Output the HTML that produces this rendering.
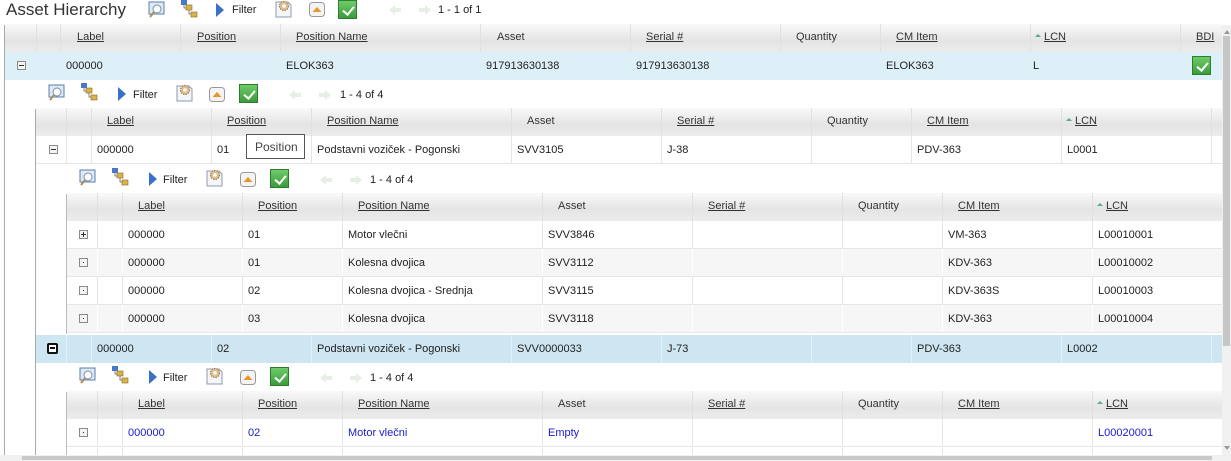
<!DOCTYPE html>
<html style="width:1231px;height:461px;overflow:hidden"><head><meta charset="utf-8"><style>
*{margin:0;padding:0;box-sizing:border-box}
body{width:1231px;height:461px;overflow:hidden;background:#fff;font-family:"Liberation Sans",Arial,sans-serif;font-size:11px;color:#222;position:relative}
.a{position:absolute;white-space:nowrap}
.hd{position:absolute;height:28px;background:linear-gradient(#f9f9f9,#e4e4e4 60%,#ececec)}
.hd span{position:absolute;top:7px;color:#333}
.hd u{color:#333}
.row{position:absolute;height:28px;border-bottom:1px solid #e6e6e6}
.row span{position:absolute;top:8px}
.sep{position:absolute;top:0;bottom:0;width:1px;background:#e4e4e4}
.hd .sep{background:#e0e0e0}
.ex{position:absolute;width:9px;height:9px;border:1px solid #8a8a8a;background:#f4f4f4;top:9px}
.ex:after{content:"";position:absolute;left:1px;top:3px;width:5px;height:1px;background:#333}
.ex.p:before{content:"";position:absolute;left:3px;top:1px;width:1px;height:5px;background:#333}
.ex.d:after{left:3px;top:3px;width:1px;height:1px}
.ex.b{width:11px;height:11px;border:2px solid #111;border-radius:2px;background:#fff;top:8px}
.ex.b:after{left:1px;top:2px;width:5px;height:2px;background:#111}
.chk{position:absolute;width:19px;height:19px;background:linear-gradient(#6fcb6a,#3b9b3a);border:1px solid #2e7d2e}
.chk:after{content:"";position:absolute;left:6px;top:3px;width:5px;height:9px;border:solid #fff;border-width:0 2px 2px 0;transform:rotate(40deg)}
.lcn:before{content:"";display:inline-block;width:0;height:0;border:3px solid transparent;border-bottom:3px solid #5a9;margin-right:3px;vertical-align:3px}
.blue{color:#1a1acc}
</style></head><body>

<div class="a" style="left:6px;top:0px;font-size:17px;color:#333">Asset Hierarchy</div>

<svg width="0" height="0" style="position:absolute"><defs>
<g id="mag"><rect x="1" y="1" width="15" height="12" fill="#dfeaf5" stroke="#5a7fb0"/><circle cx="9" cy="8" r="4" fill="#fff" stroke="#7a8fa8"/><line x1="6" y1="11" x2="2" y2="16" stroke="#b08a50" stroke-width="2"/></g>
<g id="tree"><rect x="1" y="0" width="6" height="5" fill="#4a78c8"/><rect x="6" y="5" width="6" height="5" fill="#d8b24a" stroke="#8a6a20" stroke-width=".6"/><rect x="11" y="12" width="6" height="5" fill="#d8b24a" stroke="#8a6a20" stroke-width=".6"/><path d="M4 5v3h2M9 10v4h2" stroke="#666" fill="none" stroke-width=".8"/></g>
<g id="tri"><path d="M1 1 L9 8 L1 15 Z" fill="#3a70c8"/></g>
<g id="page"><path d="M1 2h12l3 3v12H1z" fill="#f4f6fa" stroke="#8d9bb2"/><circle cx="9" cy="6" r="4.5" fill="#e0c090" stroke="#a08050" stroke-width="1.2" stroke-dasharray="1.5 1"/><circle cx="9" cy="6" r="1.8" fill="#fff"/></g>
<g id="up"><rect x="0.5" y="0.5" width="15" height="14" rx="3" fill="#f4f4f4" stroke="#999"/><path d="M3.5 10 L8 5 L12.5 10Z" fill="#e8962a"/></g>
<g id="la"><path d="M1 7 L7 2 V5 H13 V9 H7 V12Z" fill="#e6eee6"/></g>
<g id="ra"><path d="M13 7 L7 2 V5 H1 V9 H7 V12Z" fill="#e6eee6"/></g>
</defs></svg>

<svg class="a" style="left:148px;top:1px" width="18" height="18"><use href="#mag"/></svg>
<svg class="a" style="left:180px;top:0px" width="18" height="18"><use href="#tree"/></svg>
<svg class="a" style="left:215px;top:2px" width="10" height="16"><use href="#tri"/></svg>
<div class="a" style="left:232px;top:4px">Filter</div>
<svg class="a" style="left:275px;top:0px" width="18" height="19"><use href="#page"/></svg>
<svg class="a" style="left:309px;top:2px" width="17" height="16"><use href="#up"/></svg>
<div class="chk" style="left:338px;top:0px"></div>
<svg class="a" style="left:388px;top:3px" width="14" height="14"><use href="#la"/></svg>
<svg class="a" style="left:418px;top:3px" width="14" height="14"><use href="#ra"/></svg>
<div class="a" style="left:438px;top:4px">1 - 1 of 1</div>

<div class="a" style="left:4px;top:25px;width:1px;height:430px;background:#aaa"></div>

<div class="hd" style="left:5px;top:24px;width:1217px">
<i class="sep" style="left:31px"></i><i class="sep" style="left:55px"></i><i class="sep" style="left:175px"></i><i class="sep" style="left:275px"></i><i class="sep" style="left:475px"></i><i class="sep" style="left:625px"></i><i class="sep" style="left:775px"></i><i class="sep" style="left:875px"></i><i class="sep" style="left:1025px"></i><i class="sep" style="left:1175px"></i>
<span style="left:72px"><u>Label</u></span><span style="left:192px"><u>Position</u></span><span style="left:291px"><u>Position Name</u></span><span style="left:492px">Asset</span><span style="left:641px"><u>Serial #</u></span><span style="left:791px">Quantity</span><span style="left:891px"><u>CM Item</u></span><span style="left:1030px" class="lcn"><u>LCN</u></span><span style="left:1191px"><u>BDI</u></span>
</div>
<div class="row" style="left:5px;top:52px;width:1217px;background:#ddf0f7;border:none">
<i class="ex" style="left:12px"></i>
<span style="left:61px">000000</span><span style="left:281px">ELOK363</span><span style="left:481px">917913630138</span><span style="left:631px">917913630138</span><span style="left:881px">ELOK363</span><span style="left:1028px">L</span>
<div class="chk" style="left:1187px;top:4px"></div>
</div>

<svg class="a" style="left:48px;top:84px" width="18" height="18"><use href="#mag"/></svg>
<svg class="a" style="left:80px;top:83px" width="18" height="18"><use href="#tree"/></svg>
<svg class="a" style="left:117px;top:86px" width="10" height="16"><use href="#tri"/></svg>
<div class="a" style="left:133px;top:89px">Filter</div>
<svg class="a" style="left:176px;top:84px" width="18" height="19"><use href="#page"/></svg>
<svg class="a" style="left:209px;top:87px" width="17" height="16"><use href="#up"/></svg>
<div class="chk" style="left:239px;top:84px"></div>
<svg class="a" style="left:288px;top:88px" width="14" height="14"><use href="#la"/></svg>
<svg class="a" style="left:318px;top:88px" width="14" height="14"><use href="#ra"/></svg>
<div class="a" style="left:340px;top:89px">1 - 4 of 4</div>

<div class="a" style="left:35px;top:109px;width:1px;height:346px;background:#aaa"></div>

<div class="hd" style="left:36px;top:108px;width:1186px">
<i class="sep" style="left:30px"></i><i class="sep" style="left:55px"></i><i class="sep" style="left:175px"></i><i class="sep" style="left:275px"></i><i class="sep" style="left:475px"></i><i class="sep" style="left:625px"></i><i class="sep" style="left:775px"></i><i class="sep" style="left:875px"></i><i class="sep" style="left:1025px"></i><i class="sep" style="left:1175px"></i>
<span style="left:71px"><u>Label</u></span><span style="left:191px"><u>Position</u></span><span style="left:291px"><u>Position Name</u></span><span style="left:491px">Asset</span><span style="left:641px"><u>Serial #</u></span><span style="left:791px">Quantity</span><span style="left:891px"><u>CM Item</u></span><span style="left:1030px" class="lcn"><u>LCN</u></span>
</div>
<div class="row" style="left:36px;top:136px;width:1186px;background:#fff">
<i class="sep" style="left:30px"></i><i class="sep" style="left:55px"></i><i class="sep" style="left:175px"></i><i class="sep" style="left:275px"></i><i class="sep" style="left:475px"></i><i class="sep" style="left:625px"></i><i class="sep" style="left:775px"></i><i class="sep" style="left:875px"></i><i class="sep" style="left:1025px"></i><i class="sep" style="left:1175px"></i>
<i class="ex" style="left:13px"></i>
<span style="left:61px">000000</span><span style="left:181px">01</span><span style="left:281px">Podstavni voziček - Pogonski</span><span style="left:481px">SVV3105</span><span style="left:631px">J-38</span><span style="left:881px">PDV-363</span><span style="left:1031px">L0001</span>
</div>
<div class="a" style="left:246px;top:134px;width:59px;height:25px;border:1px solid #555;background:#fff;font-size:12px;padding:5px 0 0 8px;color:#444">Position</div>

<svg class="a" style="left:79px;top:169px" width="18" height="18"><use href="#mag"/></svg>
<svg class="a" style="left:111px;top:168px" width="18" height="18"><use href="#tree"/></svg>
<svg class="a" style="left:148px;top:171px" width="10" height="16"><use href="#tri"/></svg>
<div class="a" style="left:163px;top:174px">Filter</div>
<svg class="a" style="left:206px;top:169px" width="18" height="19"><use href="#page"/></svg>
<svg class="a" style="left:240px;top:172px" width="17" height="16"><use href="#up"/></svg>
<div class="chk" style="left:270px;top:169px"></div>
<svg class="a" style="left:319px;top:173px" width="14" height="14"><use href="#la"/></svg>
<svg class="a" style="left:349px;top:173px" width="14" height="14"><use href="#ra"/></svg>
<div class="a" style="left:370px;top:174px">1 - 4 of 4</div>

<div class="a" style="left:66px;top:194px;width:1px;height:140px;background:#bbb"></div>

<div class="hd" style="left:67px;top:193px;width:1155px">
<i class="sep" style="left:30px"></i><i class="sep" style="left:55px"></i><i class="sep" style="left:175px"></i><i class="sep" style="left:275px"></i><i class="sep" style="left:475px"></i><i class="sep" style="left:625px"></i><i class="sep" style="left:775px"></i><i class="sep" style="left:875px"></i><i class="sep" style="left:1025px"></i>
<span style="left:71px"><u>Label</u></span><span style="left:191px"><u>Position</u></span><span style="left:291px"><u>Position Name</u></span><span style="left:491px">Asset</span><span style="left:641px"><u>Serial #</u></span><span style="left:791px">Quantity</span><span style="left:891px"><u>CM Item</u></span><span style="left:1030px" class="lcn"><u>LCN</u></span>
</div>
<div class="row" style="left:67px;top:221px;width:1155px;background:#fff">
<i class="sep" style="left:30px"></i><i class="sep" style="left:55px"></i><i class="sep" style="left:175px"></i><i class="sep" style="left:275px"></i><i class="sep" style="left:475px"></i><i class="sep" style="left:625px"></i><i class="sep" style="left:775px"></i><i class="sep" style="left:875px"></i><i class="sep" style="left:1025px"></i>
<i class="ex p" style="left:12px"></i>
<span style="left:61px">000000</span><span style="left:181px">01</span><span style="left:281px">Motor vlečni</span><span style="left:481px">SVV3846</span><span style="left:881px">VM-363</span><span style="left:1031px">L00010001</span>
</div>
<div class="row" style="left:67px;top:249px;width:1155px;background:#f6f6f6">
<i class="sep" style="left:30px;background:#fff"></i><i class="sep" style="left:55px;background:#fff"></i><i class="sep" style="left:175px;background:#fff"></i><i class="sep" style="left:275px;background:#fff"></i><i class="sep" style="left:475px;background:#fff"></i><i class="sep" style="left:625px;background:#fff"></i><i class="sep" style="left:775px;background:#fff"></i><i class="sep" style="left:875px;background:#fff"></i><i class="sep" style="left:1025px;background:#fff"></i>
<i class="ex d" style="left:12px"></i>
<span style="left:61px">000000</span><span style="left:181px">01</span><span style="left:281px">Kolesna dvojica</span><span style="left:481px">SVV3112</span><span style="left:881px">KDV-363</span><span style="left:1031px">L00010002</span>
</div>
<div class="row" style="left:67px;top:277px;width:1155px;background:#fff">
<i class="sep" style="left:30px"></i><i class="sep" style="left:55px"></i><i class="sep" style="left:175px"></i><i class="sep" style="left:275px"></i><i class="sep" style="left:475px"></i><i class="sep" style="left:625px"></i><i class="sep" style="left:775px"></i><i class="sep" style="left:875px"></i><i class="sep" style="left:1025px"></i>
<i class="ex d" style="left:12px"></i>
<span style="left:61px">000000</span><span style="left:181px">02</span><span style="left:281px">Kolesna dvojica - Srednja</span><span style="left:481px">SVV3115</span><span style="left:881px">KDV-363S</span><span style="left:1031px">L00010003</span>
</div>
<div class="row" style="left:67px;top:305px;width:1155px;background:#f6f6f6">
<i class="sep" style="left:30px;background:#fff"></i><i class="sep" style="left:55px;background:#fff"></i><i class="sep" style="left:175px;background:#fff"></i><i class="sep" style="left:275px;background:#fff"></i><i class="sep" style="left:475px;background:#fff"></i><i class="sep" style="left:625px;background:#fff"></i><i class="sep" style="left:775px;background:#fff"></i><i class="sep" style="left:875px;background:#fff"></i><i class="sep" style="left:1025px;background:#fff"></i>
<i class="ex d" style="left:12px"></i>
<span style="left:61px">000000</span><span style="left:181px">03</span><span style="left:281px">Kolesna dvojica</span><span style="left:481px">SVV3118</span><span style="left:881px">KDV-363</span><span style="left:1031px">L00010004</span>
</div>

<div class="row" style="left:36px;top:335px;width:1186px;background:#cde6f1;border:none">
<i class="sep" style="left:30px;background:#e4f1f7"></i><i class="sep" style="left:55px;background:#e4f1f7"></i><i class="sep" style="left:175px;background:#e4f1f7"></i><i class="sep" style="left:275px;background:#e4f1f7"></i><i class="sep" style="left:475px;background:#e4f1f7"></i><i class="sep" style="left:625px;background:#e4f1f7"></i><i class="sep" style="left:775px;background:#e4f1f7"></i><i class="sep" style="left:875px;background:#e4f1f7"></i><i class="sep" style="left:1025px;background:#e4f1f7"></i><i class="sep" style="left:1175px;background:#e4f1f7"></i>
<i class="ex b" style="left:11px"></i>
<span style="left:61px">000000</span><span style="left:181px">02</span><span style="left:281px">Podstavni voziček - Pogonski</span><span style="left:481px">SVV0000033</span><span style="left:631px">J-73</span><span style="left:881px">PDV-363</span><span style="left:1031px">L0002</span>
</div>

<svg class="a" style="left:79px;top:367px" width="18" height="18"><use href="#mag"/></svg>
<svg class="a" style="left:111px;top:366px" width="18" height="18"><use href="#tree"/></svg>
<svg class="a" style="left:148px;top:369px" width="10" height="16"><use href="#tri"/></svg>
<div class="a" style="left:163px;top:372px">Filter</div>
<svg class="a" style="left:206px;top:367px" width="18" height="19"><use href="#page"/></svg>
<svg class="a" style="left:240px;top:370px" width="17" height="16"><use href="#up"/></svg>
<div class="chk" style="left:270px;top:367px"></div>
<svg class="a" style="left:319px;top:371px" width="14" height="14"><use href="#la"/></svg>
<svg class="a" style="left:349px;top:371px" width="14" height="14"><use href="#ra"/></svg>
<div class="a" style="left:370px;top:372px">1 - 4 of 4</div>

<div class="a" style="left:66px;top:392px;width:1px;height:63px;background:#bbb"></div>

<div class="hd" style="left:67px;top:391px;width:1155px">
<i class="sep" style="left:30px"></i><i class="sep" style="left:55px"></i><i class="sep" style="left:175px"></i><i class="sep" style="left:275px"></i><i class="sep" style="left:475px"></i><i class="sep" style="left:625px"></i><i class="sep" style="left:775px"></i><i class="sep" style="left:875px"></i><i class="sep" style="left:1025px"></i>
<span style="left:71px"><u>Label</u></span><span style="left:191px"><u>Position</u></span><span style="left:291px"><u>Position Name</u></span><span style="left:491px">Asset</span><span style="left:641px"><u>Serial #</u></span><span style="left:791px">Quantity</span><span style="left:891px"><u>CM Item</u></span><span style="left:1030px" class="lcn"><u>LCN</u></span>
</div>
<div class="row blue" style="left:67px;top:419px;width:1155px;background:#fff">
<i class="sep" style="left:30px"></i><i class="sep" style="left:55px"></i><i class="sep" style="left:175px"></i><i class="sep" style="left:275px"></i><i class="sep" style="left:475px"></i><i class="sep" style="left:625px"></i><i class="sep" style="left:775px"></i><i class="sep" style="left:875px"></i><i class="sep" style="left:1025px"></i>
<i class="ex d" style="left:12px"></i>
<span style="left:61px">000000</span><span style="left:181px">02</span><span style="left:281px">Motor vlečni</span><span style="left:481px">Empty</span><span style="left:1031px">L00020001</span>
</div>
<div class="row" style="left:67px;top:448px;width:1155px;height:7px;background:#fff;border:none">
<i class="sep" style="left:30px"></i><i class="sep" style="left:55px"></i><i class="sep" style="left:175px"></i><i class="sep" style="left:275px"></i><i class="sep" style="left:475px"></i><i class="sep" style="left:625px"></i><i class="sep" style="left:775px"></i><i class="sep" style="left:875px"></i><i class="sep" style="left:1025px"></i>
</div>

<div class="a" style="left:0;top:455px;width:1231px;height:6px;background:#f0f0f0"></div>
<div class="a" style="left:22px;top:456px;width:1190px;height:4px;background:#c8c8c8"></div>

<div class="a" style="left:1222px;top:25px;width:9px;height:430px;background:#f0f0f0"></div>
<div class="a" style="left:1223px;top:36px;width:7px;height:310px;background:#c6c6c6"></div>
<div class="a" style="left:1224px;top:27px;width:0;height:0;border:3px solid transparent;border-bottom:4px solid #999"></div>
<div class="a" style="left:1224px;top:446px;width:0;height:0;border:3px solid transparent;border-top:4px solid #999"></div>

</body></html>
